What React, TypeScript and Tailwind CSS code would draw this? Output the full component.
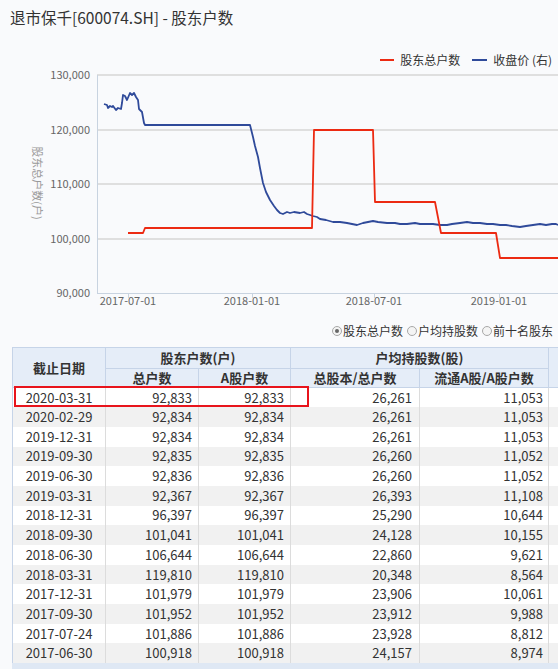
const rows = [
  ['2020-03-31', '92,833', '92,833', '26,261', '11,053'],
  ['2020-02-29', '92,834', '92,834', '26,261', '11,053'],
  ['2019-12-31', '92,834', '92,834', '26,261', '11,053'],
  ['2019-09-30', '92,835', '92,835', '26,260', '11,052'],
  ['2019-06-30', '92,836', '92,836', '26,260', '11,052'],
  ['2019-03-31', '92,367', '92,367', '26,393', '11,108'],
  ['2018-12-31', '96,397', '96,397', '25,290', '10,644'],
  ['2018-09-30', '101,041', '101,041', '24,128', '10,155'],
  ['2018-06-30', '106,644', '106,644', '22,860', '9,621'],
  ['2018-03-31', '119,810', '119,810', '20,348', '8,564'],
  ['2017-12-31', '101,979', '101,979', '23,906', '10,061'],
  ['2017-09-30', '101,952', '101,952', '23,912', '9,988'],
  ['2017-07-24', '101,886', '101,886', '23,928', '8,812'],
  ['2017-06-30', '100,918', '100,918', '24,157', '8,974'],
]

const yTicks = [
  { y: 75, label: '130,000' },
  { y: 130, label: '120,000' },
  { y: 184, label: '110,000' },
  { y: 239, label: '100,000' },
  { y: 293, label: '90,000' },
]

const xTicks = [
  { x: 128, label: '2017-07-01' },
  { x: 252, label: '2018-01-01' },
  { x: 374, label: '2018-07-01' },
  { x: 499, label: '2019-01-01' },
]

const holders =
  '128,233 143,233 145,228 312,228 314,130 373,130 375,202 435,202 441,233 496,233 500,258 558,258'

const price =
  '104,104 107,105 108,108 110,106 112,107 113,106 116,110 118,108 121,109 122,103 123,95 125,96 127,100 130,93 132,95 134,93 136,97 138,100 139,109 142,112 144,123 145,125 250,125 253,137 255,146 258,157 260,168 263,183 266,192 270,200 274,206 277,210 280,213 283,214 287,212 290,213 294,212 300,213 304,212 307,214 313,216 317,217 320,219 326,220 333,222 340,222 347,223 352,224 357,225 360,224 363,223 368,222 373,221 378,222 387,223 395,223 400,224 407,224 415,223 420,224 427,224 433,224 440,225 447,225 452,224 460,223 467,222 473,223 480,223 487,224 493,224 500,225 506,225 512,226 520,227 526,226 533,225 540,224 546,225 552,224 556,224 558,225'

function Chart() {
  return (
    <svg width="558" height="252" viewBox="0 66 558 252" className="block">
      {yTicks.slice(0, 4).map((t) => (
        <line key={t.y} x1="97" x2="558" y1={t.y} y2={t.y} stroke="#d6d6d6" strokeWidth="1.5" />
      ))}
      <line x1="97.5" x2="97.5" y1="75" y2="293" stroke="#c8d3e0" strokeWidth="1" />
      <line x1="97" x2="558" y1="293.5" y2="293.5" stroke="#c8d3e0" strokeWidth="1" />
      {xTicks.map((t) => (
        <g key={t.x}>
          <line x1={t.x + 0.5} x2={t.x + 0.5} y1="293" y2="298" stroke="#c8d3e0" />
          <text x={t.x} y="305" textAnchor="middle" fontSize="11" fill="#666">
            {t.label}
          </text>
        </g>
      ))}
      {yTicks.map((t) => (
        <text key={t.label} x="90" y={t.y + 4} textAnchor="end" fontSize="11" fill="#666">
          {t.label}
        </text>
      ))}
      <text
        x="37"
        y="183"
        textAnchor="middle"
        fontSize="11"
        fill="#999"
        transform="rotate(90 37 183)"
        dy="4"
      >
        股东总户数(户)
      </text>
      <polyline points={price} fill="none" stroke="#2f4a9a" strokeWidth="1.8" strokeLinejoin="round" />
      <polyline points={holders} fill="none" stroke="#ec2a12" strokeWidth="1.8" strokeLinejoin="round" />
    </svg>
  )
}

function Radio({ checked, label }: { checked?: boolean; label: string }) {
  return (
    <span className="inline-flex items-center">
      <span className="mr-[1px] flex h-[10px] w-[10px] items-center justify-center rounded-full border border-[#a8a8a8] bg-[#f4f4f4]">
        {checked && <span className="h-[4px] w-[4px] rounded-full bg-[#666]" />}
      </span>
      <span>{label}</span>
    </span>
  )
}

export default function App() {
  return (
    <div
      className="relative h-[669px] w-[558px] overflow-hidden bg-[#f9fafc] text-[#333]"
      style={{ fontFamily: '"Noto Sans CJK SC", "Noto Sans", sans-serif' }}
    >
      <div className="h-[40px] pl-[10px] pt-[6px] text-[15.5px] leading-[22px] text-[#333]">
        退市保千[600074.SH] - 股东户数
      </div>

      <div className="flex h-[26px] items-center justify-end gap-[4px] pt-[14px] text-[12px] leading-[16px] text-[#333]">
        <span className="h-[2px] w-[14px] bg-[#ec2a12]" />
        <span className="mr-[8px] ml-[2px]">股东总户数</span>
        <span className="h-[2px] w-[15px] bg-[#2f4a9a]" />
        <span className="ml-[2px] whitespace-nowrap pr-[6px]">收盘价 (右)</span>
      </div>

      <Chart />

      <div className="flex h-[29px] items-center gap-[4px] whitespace-nowrap pb-[4px] pl-[332px] text-[12px] leading-[16px]">
        <Radio checked label="股东总户数" />
        <Radio label="户均持股数" />
        <Radio label="前十名股东" />
      </div>

      <table className="ml-[12px] w-[620px] table-fixed border-collapse text-[13px] leading-[18px]">
        <colgroup>
          <col className="w-[93px]" />
          <col className="w-[93px]" />
          <col className="w-[92px]" />
          <col className="w-[129px]" />
          <col className="w-[129px]" />
          <col className="w-[84px]" />
        </colgroup>
        <thead className="bg-[#e5edf8] font-bold">
          <tr className="h-[21px]">
            <th rowSpan={2} className="border border-[#c6d4e8] font-bold">
              截止日期
            </th>
            <th colSpan={2} className="border border-[#c6d4e8] font-bold">
              股东户数(户)
            </th>
            <th colSpan={2} className="border border-[#c6d4e8] font-bold">
              户均持股数(股)
            </th>
            <th rowSpan={2} className="border border-[#c6d4e8]" />
          </tr>
          <tr className="h-[18px]">
            <th className="border border-[#c6d4e8] font-bold">总户数</th>
            <th className="border border-[#c6d4e8] font-bold">A股户数</th>
            <th className="border border-[#c6d4e8] font-bold">总股本/总户数</th>
            <th className="border border-[#c6d4e8] font-bold">流通A股/A股户数</th>
          </tr>
        </thead>
        <tbody>
          {rows.map((r, i) => (
            <tr key={r[0]} className={i % 2 === 0 ? 'h-[19.7px] bg-white' : 'h-[19.7px] bg-[#f1f1f1]'}>
              <td className="border-r border-l border-r-[#dcdcdc] border-l-[#c6d4e8] p-0 text-center">{r[0]}</td>
              <td className="border-r border-[#dcdcdc] p-0 pr-[6px] text-right">{r[1]}</td>
              <td className="border-r border-[#dcdcdc] p-0 pr-[6px] text-right">{r[2]}</td>
              <td className="border-r border-[#dcdcdc] p-0 pr-[7px] text-right">{r[3]}</td>
              <td className="border-r border-[#dcdcdc] p-0 pr-[5px] text-right">{r[4]}</td>
              <td className="p-0" />
            </tr>
          ))}
        </tbody>
      </table>
      <div className="ml-[12px] h-[10px] bg-[#dfe8f4]" />

      <div className="absolute top-[386px] left-[14px] h-[21px] w-[295px] border-2 border-[#e8141c]" />
    </div>
  )
}
